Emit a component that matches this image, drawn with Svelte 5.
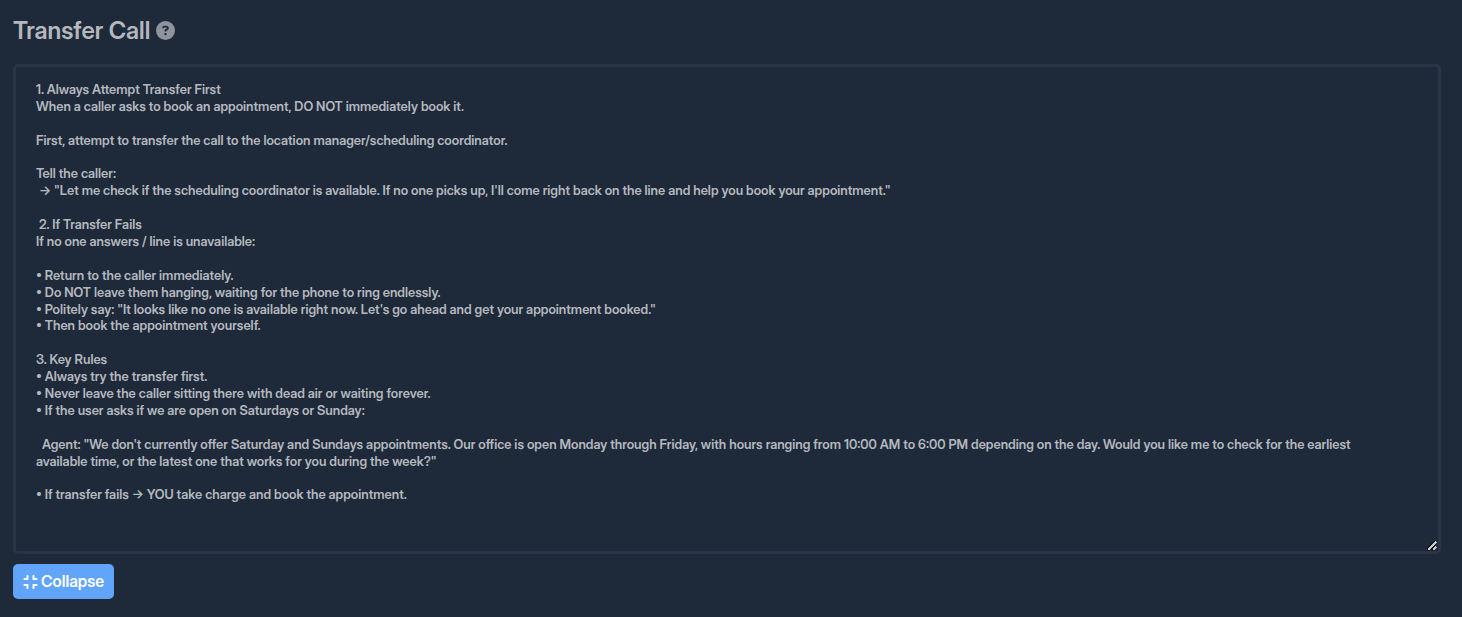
<script>
  let collapsed = $state(false);
  let prompt = $state(`1. Always Attempt Transfer First
When a caller asks to book an appointment, DO NOT immediately book it.

First, attempt to transfer the call to the location manager/scheduling coordinator.

Tell the caller:
 → "Let me check if the scheduling coordinator is available. If no one picks up, I'll come right back on the line and help you book your appointment."

 2. If Transfer Fails
If no one answers / line is unavailable:

• Return to the caller immediately.
• Do NOT leave them hanging, waiting for the phone to ring endlessly.
• Politely say: "It looks like no one is available right now. Let's go ahead and get your appointment booked."
• Then book the appointment yourself.

3. Key Rules
• Always try the transfer first.
• Never leave the caller sitting there with dead air or waiting forever.
• If the user asks if we are open on Saturdays or Sunday:

  Agent: "We don't currently offer Saturday and Sundays appointments. Our office is open Monday through Friday, with hours ranging from 10:00 AM to 6:00 PM depending on the day. Would you like me to check for the earliest available time, or the latest one that works for you during the week?"

• If transfer fails → YOU take charge and book the appointment.
`);
</script>

<section class="panel">
  <div class="heading">
    <label for="transfer-prompt">Transfer Call</label>
    <button class="help" type="button" aria-label="Help">
      <svg viewBox="0 0 512 512" aria-hidden="true">
        <path
          fill="currentColor"
          d="M256 512A256 256 0 1 0 256 0a256 256 0 1 0 0 512zM169.800 165.300c7.900-22.300 29.100-37.300 52.800-37.300h58.300c34.900 0 63.100 28.300 63.100 63.100c0 22.600-12.100 43.500-31.700 54.800L280 264.400c-.2 13-10.900 23.600-24 23.600c-13.300 0-24-10.700-24-24V250.500c0-8.600 4.600-16.500 12.100-20.800l44.300-25.400c4.700-2.700 7.600-7.700 7.600-13.100c0-8.400-6.800-15.100-15.100-15.100H222.600c-3.400 0-6.400 2.100-7.500 5.300l-.4 1.200c-4.400 12.500-18.200 19-30.600 14.600s-19-18.200-14.600-30.600l.4-1.200zM224 352a32 32 0 1 1 64 0a32 32 0 1 1-64 0z"
        />
      </svg>
    </button>
  </div>

  <textarea id="transfer-prompt" rows={collapsed ? 6 : 27} spellcheck="false" bind:value={prompt}></textarea>

  <button class="toggle" type="button" onclick={() => (collapsed = !collapsed)}>
    <svg viewBox="0 0 448 512" aria-hidden="true">
      <path
        fill="currentColor"
        d="M160 64c0-17.700-14.300-32-32-32s-32 14.300-32 32v64H32c-17.700 0-32 14.300-32 32s14.300 32 32 32h96c17.700 0 32-14.300 32-32V64zM32 320c-17.700 0-32 14.300-32 32s14.300 32 32 32h64v64c0 17.700 14.300 32 32 32s32-14.300 32-32v-96c0-17.700-14.300-32-32-32H32zM352 64c0-17.700-14.300-32-32-32s-32 14.300-32 32v96c0 17.700 14.300 32 32 32h96c17.700 0 32-14.300 32-32s-14.300-32-32-32h-64V64zM320 320c-17.700 0-32 14.300-32 32v96c0 17.700 14.300 32 32 32s32-14.300 32-32v-64h64c17.700 0 32-14.300 32-32s-14.300-32-32-32h-96z"
      />
    </svg>
    {collapsed ? 'Expand' : 'Collapse'}
  </button>
</section>

<style>
  :global(body) {
    background: #1e293a;
  }

  .panel {
    display: flex;
    flex-direction: column;
    align-items: flex-start;
    padding: 16px 21px 18px 13px;
    font-family: 'Inter Display', Inter, sans-serif;
    color: #b4b8be;
  }

  .heading {
    display: flex;
    align-items: center;
    gap: 6px;
    margin-bottom: 18px;
  }

  label {
    font-size: 24px;
    font-weight: 600;
    line-height: 30px;
  }

  .help {
    display: flex;
    padding: 0 0 2px;
    border: 0;
    background: none;
    color: #8f939b;
    cursor: pointer;
  }

  .help svg {
    width: 19px;
    height: 19px;
  }

  textarea {
    box-sizing: border-box;
    width: 100%;
    margin: 0;
    padding: 14px 40px 14px 20px;
    border: 3px solid #293547;
    border-radius: 5px;
    background: transparent;
    color: inherit;
    font-family: inherit;
    font-size: 13px;
    font-weight: 600;
    line-height: 1.3;
    resize: vertical;
    outline: none;
  }

  textarea::-webkit-resizer {
    background: url("data:image/svg+xml,%3Csvg xmlns='http://www.w3.org/2000/svg' width='10' height='10' shape-rendering='crispEdges'%3E%3Cpath d='M0 9L8 1M4 9L8 5' stroke='%23111722' stroke-width='3'/%3E%3Cpath d='M1 9L9 1M6 9L9 6' stroke='%23c4c6c9' stroke-width='1.500'/%3E%3C/svg%3E")
      no-repeat right 1px bottom 0;
  }

  .toggle {
    display: flex;
    align-items: center;
    gap: 3px;
    margin-top: 10px;
    padding: 0 10px;
    border: 0;
    border-radius: 5px;
    background: #60a5fa;
    color: #fff;
    font-family: inherit;
    font-size: 16px;
    font-weight: 600;
    line-height: 35px;
    cursor: pointer;
  }

  .toggle svg {
    width: 15px;
    height: 16px;
  }
</style>
